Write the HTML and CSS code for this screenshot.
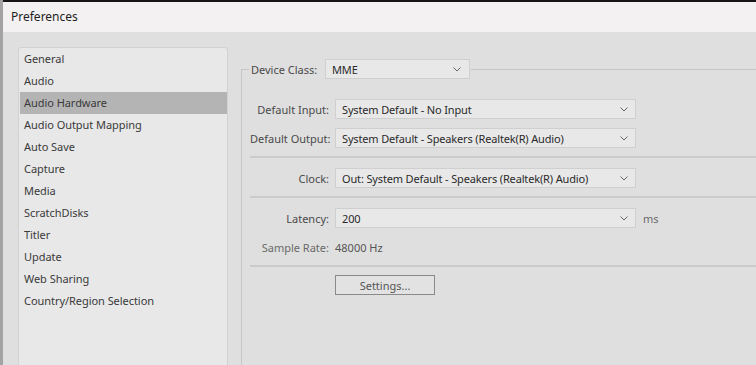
FILE: index.html
```html
<!DOCTYPE html>
<html lang="en">
<head>
  <meta charset="UTF-8">
  <title>Preferences</title>
  <link rel="stylesheet" href="styles.css">
</head>
<body>
  <div class="window">
    <div class="titlebar">Preferences</div>

    <div class="content">
      <ul class="nav">
        <li>General</li>
        <li>Audio</li>
        <li class="active">Audio Hardware</li>
        <li>Audio Output Mapping</li>
        <li>Auto Save</li>
        <li>Capture</li>
        <li>Media</li>
        <li>ScratchDisks</li>
        <li>Titler</li>
        <li>Update</li>
        <li>Web Sharing</li>
        <li>Country/Region Selection</li>
      </ul>

      <fieldset class="panel">
        <legend class="device">
          <span class="device-label">Device Class:</span>
          <div class="select short">
            <span>MME</span>
            <svg class="chevron" width="8" height="5" viewBox="0 0 8 5"><polyline points="0.5,0.5 4,4 7.5,0.5" /></svg>
          </div>
        </legend>

        <div class="form">
          <div class="row">
            <span class="label">Default Input:</span>
            <div class="select">
              <span>System Default - No Input</span>
              <svg class="chevron" width="8" height="5" viewBox="0 0 8 5"><polyline points="0.5,0.5 4,4 7.5,0.5" /></svg>
            </div>
          </div>
          <div class="row">
            <span class="label">Default Output:</span>
            <div class="select">
              <span>System Default - Speakers (Realtek(R) Audio)</span>
              <svg class="chevron" width="8" height="5" viewBox="0 0 8 5"><polyline points="0.5,0.5 4,4 7.5,0.5" /></svg>
            </div>
          </div>

          <div class="sep"></div>

          <div class="row">
            <span class="label">Clock:</span>
            <div class="select">
              <span>Out: System Default - Speakers (Realtek(R) Audio)</span>
              <svg class="chevron" width="8" height="5" viewBox="0 0 8 5"><polyline points="0.5,0.5 4,4 7.5,0.5" /></svg>
            </div>
          </div>

          <div class="sep"></div>

          <div class="row">
            <span class="label">Latency:</span>
            <div class="select">
              <span>200</span>
              <svg class="chevron" width="8" height="5" viewBox="0 0 8 5"><polyline points="0.5,0.5 4,4 7.5,0.5" /></svg>
            </div>
            <span class="unit">ms</span>
          </div>
          <div class="row">
            <span class="label light">Sample Rate:</span>
            <span class="value">48000 Hz</span>
          </div>

          <div class="sep last"></div>

          <div class="row">
            <span class="label"></span>
            <button class="button">Settings...</button>
          </div>
        </div>
      </fieldset>
    </div>
  </div>
</body>
</html>
```

FILE: styles.css
```css
html, body {
  margin: 0;
  padding: 0;
  height: 100%;
  overflow: hidden;
  background: #a3a3a3;
  font-family: "Noto Sans", "Open Sans", sans-serif;
  font-size: 11px;
  color: #3a3a3a;
}

.window {
  margin-left: 3px;
  height: 100%;
  display: flex;
  flex-direction: column;
  background: #dfdfdf;
  border-top: 2px solid #161616;
  box-sizing: border-box;
}

.titlebar {
  height: 30px;
  line-height: 30px;
  padding-left: 8px;
  background: #f3f1f1;
  font-size: 12px;
  color: #1e1e1e;
  flex-shrink: 0;
}

.content {
  flex: 1;
  display: flex;
  gap: 13px;
  padding: 15px 0 0 15px;
  min-height: 0;
}

/* left category list */
.nav {
  list-style: none;
  margin: 0;
  padding: 0 0 0 1px;
  width: 210px;
  box-sizing: border-box;
  background: #e8e8e8;
  border: 1px solid #d2d2d2;
  border-bottom: none;
  border-radius: 3px 3px 0 0;
}

.nav li {
  height: 22px;
  line-height: 22px;
  padding-left: 4px;
  color: #3a3a3a;
  white-space: nowrap;
  letter-spacing: -0.05px;
}

.nav li.active {
  background: #b4b4b4;
}

/* right settings group */
.panel {
  flex: 1;
  margin: 12px 0 0 0;
  padding: 0;
  min-width: 0;
  border: 1px solid #c6c6c6;
  border-right: none;
  border-bottom: none;
}

.device {
  display: flex;
  align-items: center;
  margin-left: 7px;
  padding: 0 1px 0 2px;
}

.device-label {
  width: 74px;
  color: #4a4a4a;
}

.select {
  display: flex;
  align-items: center;
  justify-content: space-between;
  width: 301px;
  height: 20px;
  box-sizing: border-box;
  padding: 0 7px 0 6px;
  background: #e8e8e8;
  border: 1px solid #cfcfcf;
  color: #2a2a2a;
  white-space: nowrap;
  letter-spacing: -0.15px;
}

.select.short {
  width: 145px;
  padding-right: 8px;
}

.chevron {
  fill: none;
  stroke: #666;
  stroke-width: 1;
  flex-shrink: 0;
}

.form {
  padding: 20px 0 0 8px;
}

.row {
  display: flex;
  align-items: center;
  gap: 6px;
  height: 20px;
}

.row + .row {
  margin-top: 9px;
}

.label {
  width: 79px;
  text-align: right;
  color: #4a4a4a;
  white-space: nowrap;
}

.label.light,
.unit {
  color: #6a6a6a;
}

.unit {
  margin-left: 1px;
}

.value {
  color: #555;
}

.sep {
  height: 2px;
  background: #cbcbcb;
  margin: 8px 0 10px;
}

.sep.last {
  margin-bottom: 8px;
}

.button {
  width: 100px;
  height: 20px;
  padding: 0;
  background: #e2e2e2;
  border: 1px solid #8a8a8a;
  font-family: "Noto Sans", "Open Sans", sans-serif;
  font-size: 11px;
  color: #555;
}
```
